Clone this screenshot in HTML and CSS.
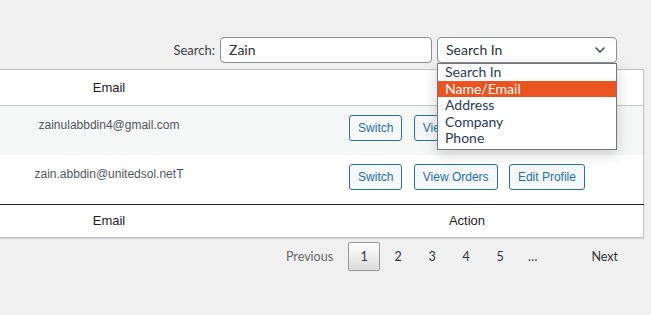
FILE: index.html
```html
<!DOCTYPE html>
<html lang="en">
<head>
    <meta charset="UTF-8">
    <title>Customers</title>
    <link rel="stylesheet" href="styles.css">
</head>
<body>
    <div class="search-bar">
        <label class="search-label">Search:</label>
        <div class="search-input">Zain</div>
        <div class="search-select">
            <span>Search In</span>
            <svg class="chevron" width="12" height="8" viewBox="0 0 12 8"><path d="M1.5 1.5 L6 6 L10.5 1.5" fill="none" stroke="#3c434a" stroke-width="1.4"/></svg>
            <ul class="select-list">
                <li>Search In</li>
                <li class="active">Name/Email</li>
                <li>Address</li>
                <li>Company</li>
                <li>Phone</li>
            </ul>
        </div>
    </div>

    <div class="table-wrap">
        <table class="customers">
            <thead>
                <tr>
                    <th class="col-email">Email</th>
                    <th class="col-action"></th>
                </tr>
            </thead>
            <tbody>
                <tr class="alt">
                    <td class="email">zainulabbdin4@gmail.com</td>
                    <td class="actions">
                        <button>Switch</button>
                        <button>View Orders</button>
                        <button>Edit Profile</button>
                    </td>
                </tr>
                <tr>
                    <td class="email">zain.abbdin@unitedsol.netT</td>
                    <td class="actions">
                        <button>Switch</button>
                        <button>View Orders</button>
                        <button>Edit Profile</button>
                    </td>
                </tr>
            </tbody>
            <tfoot>
                <tr>
                    <th>Email</th>
                    <th>Action</th>
                </tr>
            </tfoot>
        </table>
    </div>

    <div class="pagination">
        <a class="page disabled">Previous</a>
        <a class="page current">1</a>
        <a class="page">2</a>
        <a class="page">3</a>
        <a class="page">4</a>
        <a class="page">5</a>
        <span class="ellipsis">…</span>
        <a class="page next">Next</a>
    </div>
</body>
</html>
```

FILE: styles.css
```css
body {
    margin: 0;
    padding: 0;
    background: #f0f0f1;
    font-family: 'Lato', 'Noto Sans', sans-serif;
    color: #3c434a;
    overflow: hidden;
}

.search-bar {
    display: flex;
    justify-content: flex-end;
    align-items: center;
    padding: 37px 34px 0 0;
    height: 26px;
}

.search-label {
    font-size: 13px;
    margin-right: 5px;
}

.search-input {
    box-sizing: border-box;
    width: 212px;
    height: 26px;
    border: 1px solid #8c8f94;
    border-radius: 4px;
    background: #fff;
    font-size: 14px;
    line-height: 24px;
    padding: 0 8px;
    color: #2c3338;
    margin-right: 5px;
}

.search-select {
    position: relative;
    box-sizing: border-box;
    width: 180px;
    height: 26px;
    border: 1px solid #8c8f94;
    border-radius: 4px;
    background: #fff;
    font-size: 14px;
    line-height: 24px;
    padding: 0 8px;
    color: #2c3338;
    display: flex;
    justify-content: space-between;
    align-items: center;
}

.chevron {
    margin-right: 2px;
}

.select-list {
    position: absolute;
    top: 25px;
    left: -1px;
    width: 180px;
    box-sizing: border-box;
    margin: 0;
    padding: 0 0 2px;
    list-style: none;
    background: #fff;
    border: 1px solid #767676;
    box-shadow: 0 4px 14px rgba(0, 0, 0, 0.18);
    z-index: 2;
}

.select-list li {
    height: 16.5px;
    line-height: 16px;
    padding: 0 7px;
    color: #1f3b57;
}

.select-list li.active {
    background: #e95420;
    color: #fff;
}

.table-wrap {
    margin: 6px 7px 0 -74px;
}

.customers {
    width: 100%;
    border-collapse: collapse;
    background: #fff;
    border: 1px solid #c3c4c7;
    box-shadow: 0 1px 1px rgba(0, 0, 0, 0.12);
    font-family: 'Liberation Sans', Arial, sans-serif;
}

.customers th {
    font-weight: normal;
    font-size: 13px;
    color: #1d2327;
    text-align: center;
}

.customers thead th {
    height: 35px;
    padding: 0;
    border-bottom: 1px solid #c3c4c7;
}

.col-email {
    width: 364px;
}

.customers tfoot th {
    height: 31px;
    padding: 0 0 1px;
    border-top: 1px solid #1d2327;
}

.customers td {
    vertical-align: top;
    text-align: center;
    font-size: 12px;
    color: #50575e;
}

.customers tr.alt td {
    background: #f6f7f7;
}

.email {
    padding: 12px 10px 0;
    height: 37px;
}

.actions {
    padding: 9px 10px 13px;
}

.actions button {
    height: 26px;
    padding: 0 8px;
    margin: 0 4px;
    border: 1px solid #2271b1;
    border-radius: 3px;
    background: #f6f7f7;
    color: #2271b1;
    font-family: 'Liberation Sans', Arial, sans-serif;
    font-size: 12px;
}

.pagination {
    display: flex;
    justify-content: flex-end;
    align-items: center;
    padding: 4px 21px 0 0;
    font-size: 12.5px;
}

.page {
    box-sizing: border-box;
    height: 29px;
    line-height: 27px;
    min-width: 32px;
    padding: 0 11px;
    margin-left: 2px;
    border: 1px solid transparent;
    border-radius: 2px;
    text-align: center;
    color: #333;
}

.page.disabled {
    color: #666;
    padding-right: 12px;
}

.page.current {
    border-color: #979797;
    background: linear-gradient(to bottom, #fff 0%, #dcdcdc 100%);
}

.ellipsis {
    padding: 0 12px;
    color: #333;
}

.page.next {
    margin-left: 30px;
}
```
